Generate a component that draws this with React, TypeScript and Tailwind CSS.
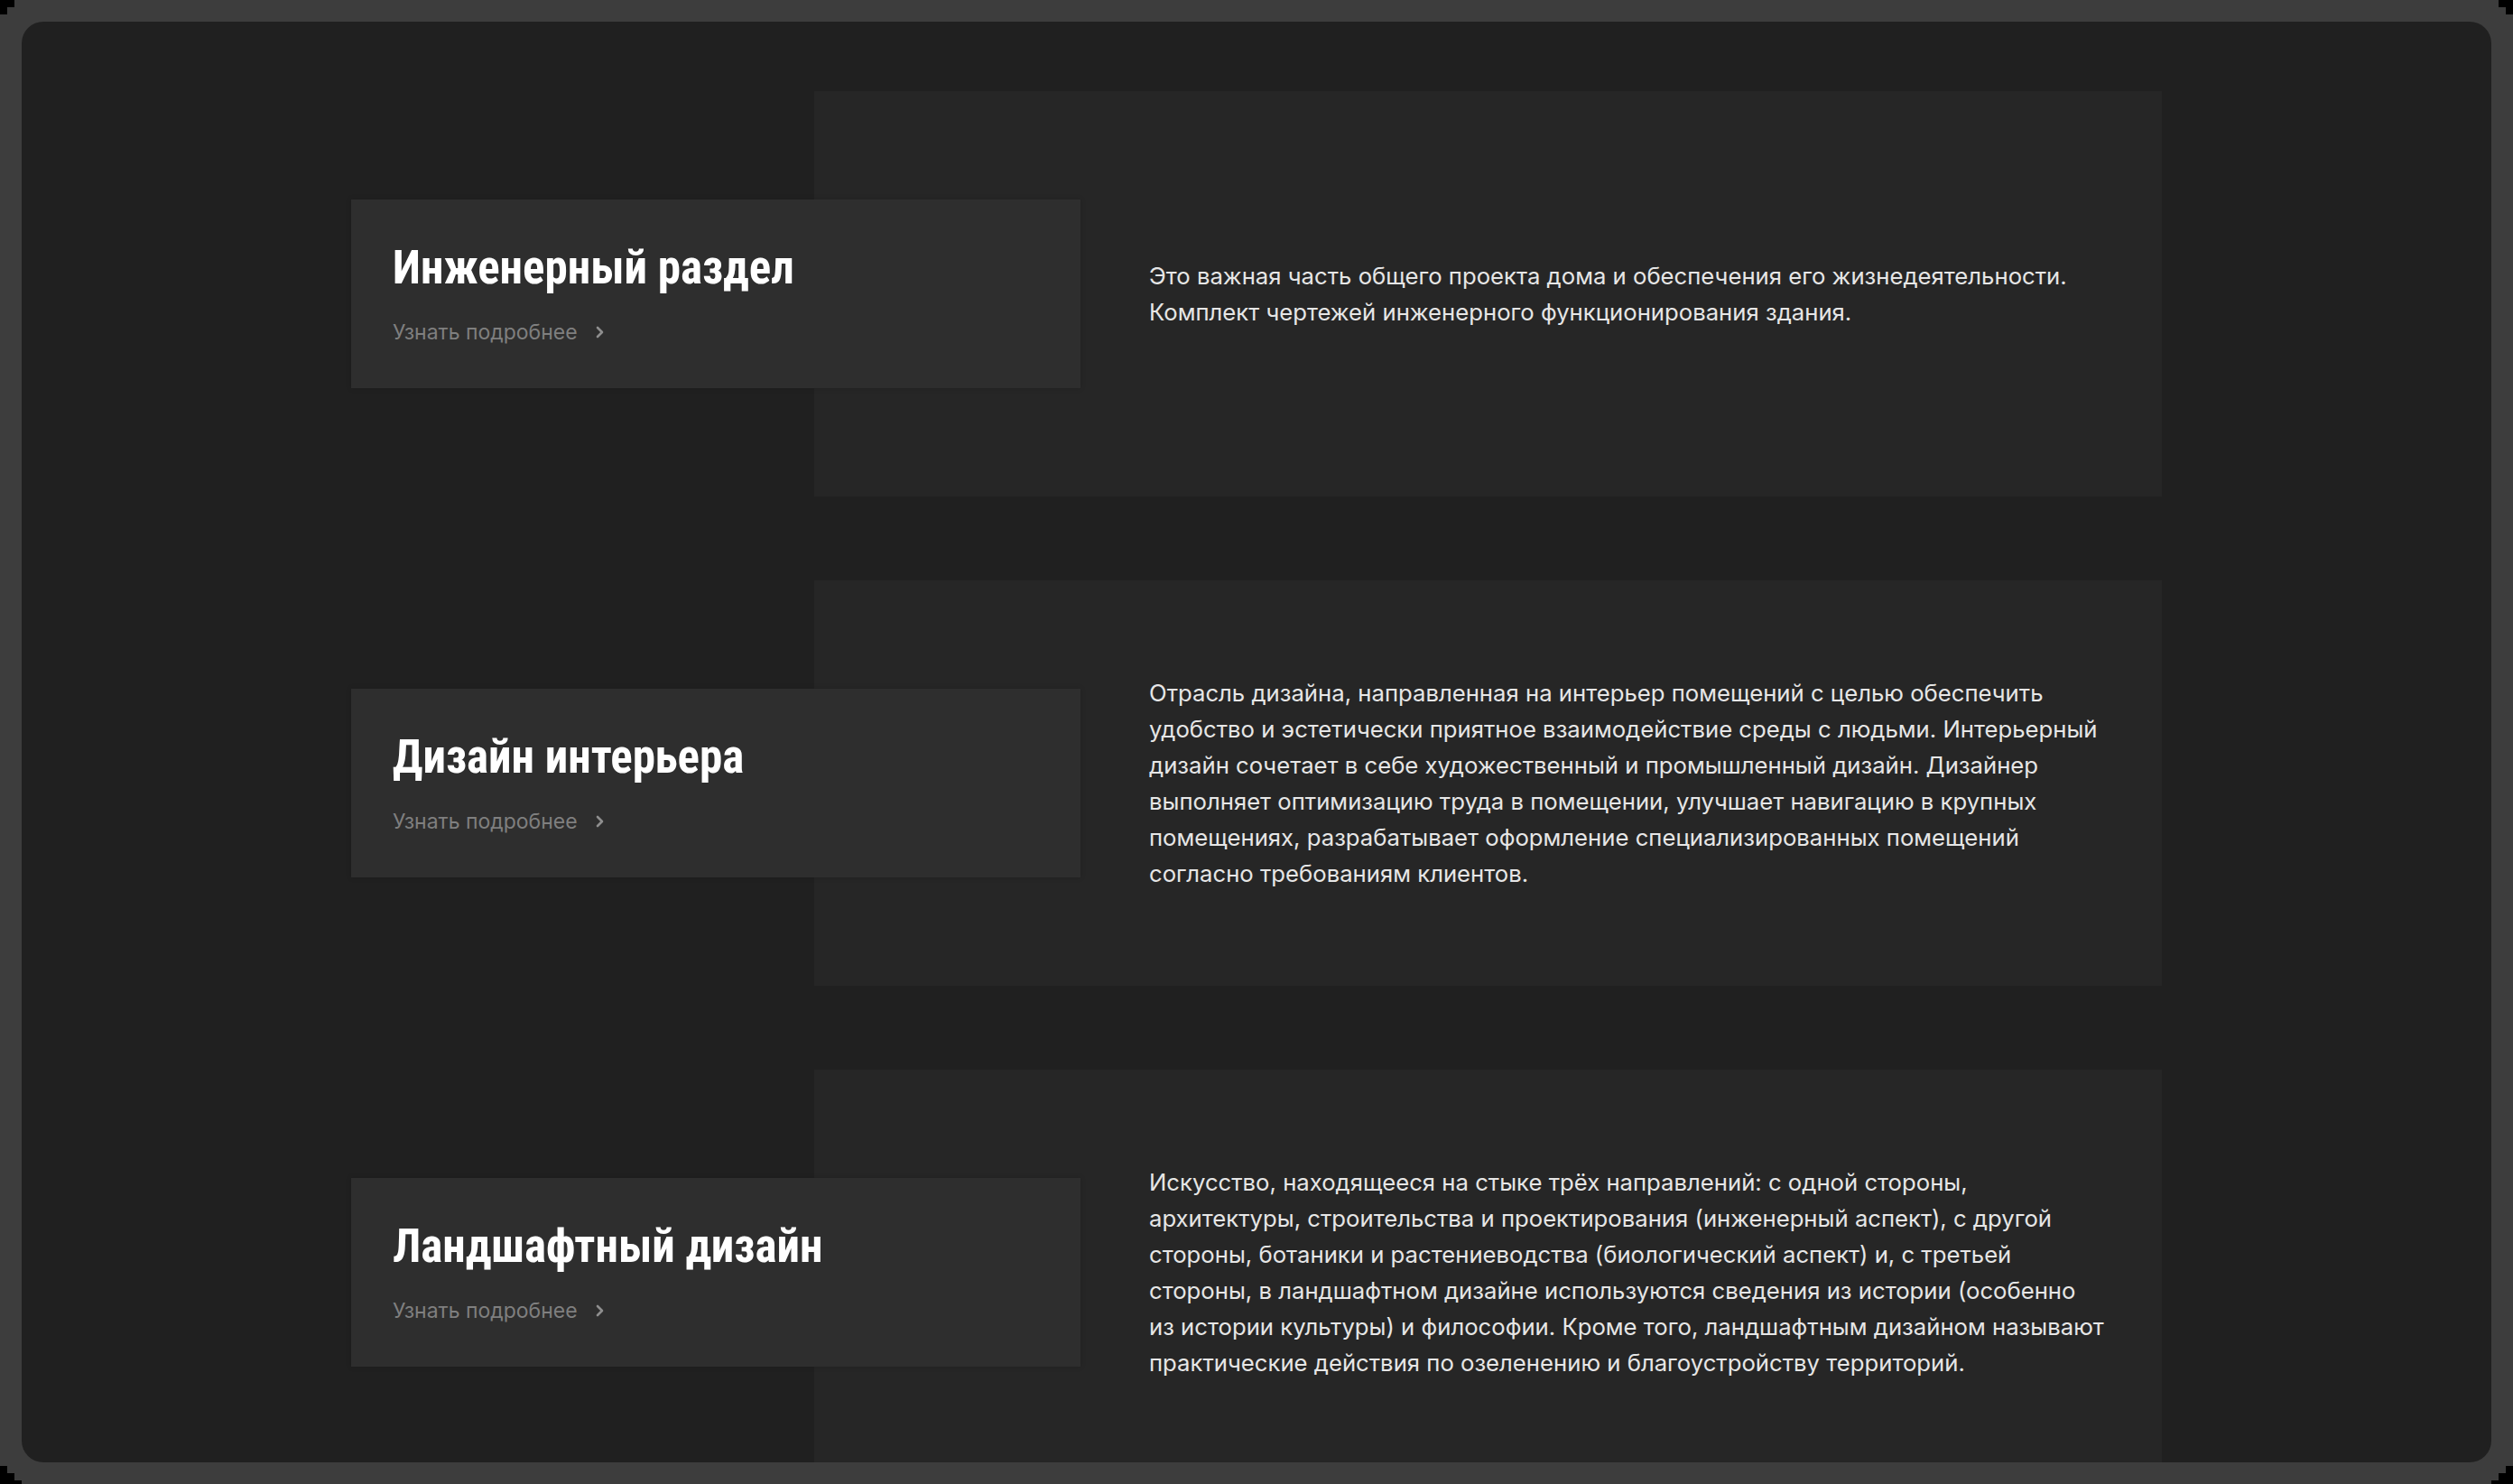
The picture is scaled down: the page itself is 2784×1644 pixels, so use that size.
import React from "react";

const items = [
  {
    title: "Инженерный раздел",
    text: "Это важная часть общего проекта дома и обеспечения его жизнедеятельности. Комплект чертежей инженерного функционирования здания.",
  },
  {
    title: "Дизайн интерьера",
    text: "Отрасль дизайна, направленная на интерьер помещений с целью обеспечить удобство и эстетически приятное взаимодействие среды с людьми. Интерьерный дизайн сочетает в себе художественный и промышленный дизайн. Дизайнер выполняет оптимизацию труда в помещении, улучшает навигацию в крупных помещениях, разрабатывает оформление специализированных помещений согласно требованиям клиентов.",
  },
  {
    title: "Ландшафтный дизайн",
    text: "Искусство, находящееся на стыке трёх направлений: с одной стороны, архитектуры, строительства и проектирования (инженерный аспект), с другой стороны, ботаники и растениеводства (биологический аспект) и, с третьей стороны, в ландшафтном дизайне используются сведения из истории (особенно из\u00A0истории культуры) и философии. Кроме того, ландшафтным дизайном называют практические действия по озеленению и благоустройству территорий.",
  },
];

function Row({ title, text }: { title: string; text: string }) {
  return (
    <div className="grid grid-cols-[513px_295px_1198px] shrink-0">
      <div className="col-start-2 col-end-4 row-start-1 h-[449px] bg-[#262626]" />
      <div className="col-start-1 col-end-3 row-start-1 self-center h-[209px] bg-[#2e2e2e] z-10 flex flex-col justify-center pl-[46px] shadow-[0_0_6px_rgba(0,0,0,0.15)]">
        <h2
          className="text-white text-[51px] font-bold leading-[56px] [font-stretch:condensed]"
          style={{ fontFamily: '"Roboto Condensed", "Liberation Sans Narrow", Roboto, sans-serif' }}
        >
          {title}
        </h2>
        <div className="flex items-center gap-[19px] mt-[28px] text-[#7f7f7f]">
          <span className="text-[23px] leading-[30px] font-['Inter',sans-serif]">Узнать подробнее</span>
          <svg width="11" height="16" viewBox="0 0 11 16" fill="none" stroke="#8e8e8e" strokeWidth="2.6" strokeLinecap="round" strokeLinejoin="round">
            <path d="M3 3l5 5-5 5" />
          </svg>
        </div>
      </div>
      <div className="col-start-3 col-end-4 row-start-1 self-center z-10 pl-[76px] pr-[50px]">
        <p className="text-[#e6e6e6] text-[25.7px] leading-[40px] font-['Inter',sans-serif]">{text}</p>
      </div>
    </div>
  );
}

export default function App() {
  return (
    <div className="relative w-[2784px] h-[1644px] bg-[#3d3d3d] p-[24px] overflow-hidden">
      <div className="absolute left-0 top-0 w-[16px] h-[8px] bg-black" />
      <div className="absolute left-0 top-[8px] w-[8px] h-[8px] bg-black" />
      <div className="absolute right-0 top-0 w-[16px] h-[8px] bg-black" />
      <div className="absolute right-0 top-[8px] w-[8px] h-[8px] bg-black" />
      <div className="absolute left-0 bottom-0 w-[24px] h-[4px] bg-black" />
      <div className="absolute left-0 bottom-[4px] w-[16px] h-[8px] bg-black" />
      <div className="absolute left-0 bottom-[12px] w-[8px] h-[8px] bg-black" />
      <div className="absolute right-0 bottom-0 w-[24px] h-[4px] bg-black" />
      <div className="absolute right-0 bottom-[4px] w-[16px] h-[8px] bg-black" />
      <div className="absolute right-0 bottom-[12px] w-[8px] h-[8px] bg-black" />
      <div className="w-full h-full rounded-[24px] bg-[#202020] overflow-hidden flex flex-col items-center pt-[77px] gap-[93px]">
        {items.map((it) => (
          <Row key={it.title} title={it.title} text={it.text} />
        ))}
      </div>
    </div>
  );
}
